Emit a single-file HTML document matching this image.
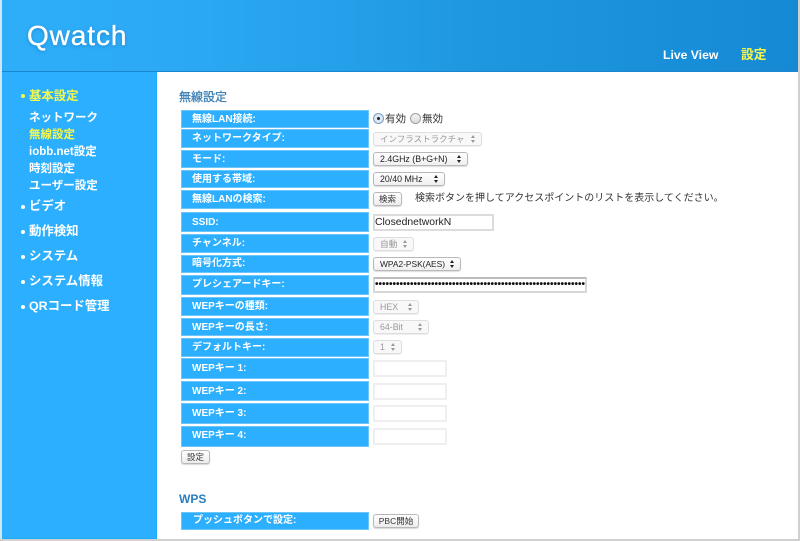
<!DOCTYPE html>
<html lang="ja"><head><meta charset="utf-8"><title>Qwatch</title>
<style>
html,body{margin:0;padding:0;background:#fff}
body{width:800px;height:541px;position:relative;overflow:hidden;font-family:"Liberation Sans","Noto Sans CJK JP",sans-serif;color:#333}
div,span{position:absolute;box-sizing:border-box;white-space:nowrap}
#hd{left:2px;top:0;width:796px;height:72px;background:linear-gradient(90deg,#2eaef9 0%,#2ba8f3 25%,#1e97e0 60%,#1689d4 100%);border-bottom:1px solid #1a86cf}
#sb{left:2px;top:72px;width:155px;height:467px;background:#2cafff;border-right:1px solid #1eaaff;border-bottom:1px solid #1eaaff}
.logo{left:27px;top:19px;font-size:28px;line-height:34px;color:#fff;letter-spacing:.9px;-webkit-text-stroke:.35px #fff;text-shadow:0 1px 3px rgba(0,60,120,.35)}
.nav{font-size:12.2px;font-weight:bold;line-height:16px;top:47px;color:#fff}
.m{font-size:12.4px;font-weight:bold;line-height:16px;color:#fff;left:29px}
.s{font-size:11.5px;line-height:16px;color:#fff;left:29px;font-weight:bold}
.d{left:21px;width:4px;height:4px;border-radius:50%;background:#fff}
.y{color:#f6f84a}
.l{left:181px;width:188px;background:#2cafff;border:1px solid #6cc6fb;color:#fff;font-size:10px;font-weight:bold;padding-left:10px}
.h{left:179px;font-size:12px;font-weight:bold;color:#2a7fc0;line-height:14px}
.sel{height:14px;background:linear-gradient(#fff,#efefef);border:1px solid #b8b8b8;border-radius:3px;font-size:8.8px;line-height:13px;padding-left:6px;color:#222;box-shadow:0 1px 1px rgba(0,0,0,.14)}
.sel.dis{color:#999;border-color:#dedede;background:#f8f8f8;box-shadow:0 1px 0 #eee}
.sel i{position:absolute;right:5px;top:2px;width:5px;height:8px}
.sel i:before,.sel i:after{content:"";position:absolute;left:0;border-left:2.5px solid transparent;border-right:2.5px solid transparent}
.sel i:before{top:0;border-bottom:3px solid #222}
.sel i:after{bottom:0;border-top:3px solid #222}
.sel.dis i:before{border-bottom-color:#999}
.sel.dis i:after{border-top-color:#999}
.in{left:373px;width:74px;height:17px;background:#fff;border:2px solid #efefef}
.btn{height:14px;background:linear-gradient(#fff,#ececec);border:1px solid #b8b8b8;border-radius:3px;font-size:8.5px;line-height:12px;text-align:center;color:#333;box-shadow:0 1px 1px rgba(0,0,0,.16)}
.t{font-size:10px;line-height:14px;color:#333}
.r{width:11px;height:11px;border-radius:50%;border:1px solid #a0a0a0;background:linear-gradient(#f4f4f4,#dcdcdc)}
.r.on{border-color:#7c9cc4;background:#dbe8f8}
.r.on:after{content:"";position:absolute;left:3px;top:3px;width:3px;height:3px;border-radius:50%;background:#222}
</style></head><body>
<div style="left:0;top:0;width:2px;height:541px;background:#cfe6f5"></div>
<div style="left:798px;top:0;width:2px;height:541px;background:#d0d0d0"></div>
<div style="left:0;top:539px;width:800px;height:2px;background:#d0d0d0"></div>
<div id="hd"></div>
<div id="sb"></div>
<div class="logo">Qwatch</div>
<div class="nav" style="left:663px">Live View</div>
<div class="nav y" style="left:741px;font-size:12.8px">設定</div>

<div class="d" style="top:94px;background:#f6f84a"></div><div class="m y" style="top:88px">基本設定</div>
<div class="s" style="top:110px">ネットワーク</div>
<div class="s y" style="top:127px">無線設定</div>
<div class="s" style="top:144px">iobb.net設定</div>
<div class="s" style="top:161px">時刻設定</div>
<div class="s" style="top:178px">ユーザー設定</div>
<div class="d" style="top:205px"></div><div class="m" style="top:198px">ビデオ</div>
<div class="d" style="top:230px"></div><div class="m" style="top:223px">動作検知</div>
<div class="d" style="top:255px"></div><div class="m" style="top:248px">システム</div>
<div class="d" style="top:280px"></div><div class="m" style="top:273px">システム情報</div>
<div class="d" style="top:305px"></div><div class="m" style="top:298px">QRコード管理</div>

<div class="h" style="top:90px;font-weight:normal;color:#3b7fb5;-webkit-text-stroke:.3px #3b7fb5">無線設定</div>
<div class="l" style="top:110px;height:18px;line-height:18px">無線LAN接続:</div>
<div class="l" style="top:129px;height:19px;line-height:18px">ネットワークタイプ:</div>
<div class="l" style="top:150px;height:18px;line-height:17px">モード:</div>
<div class="l" style="top:170px;height:18px;line-height:17px">使用する帯域:</div>
<div class="l" style="top:190px;height:19px;line-height:17px">無線LANの検索:</div>
<div class="l" style="top:212px;height:20px;line-height:20px">SSID:</div>
<div class="l" style="top:234px;height:19px;line-height:17px">チャンネル:</div>
<div class="l" style="top:255px;height:18px;line-height:16px">暗号化方式:</div>
<div class="l" style="top:275px;height:20px;line-height:17px">プレシェアードキー:</div>
<div class="l" style="top:297px;height:19px;line-height:17px">WEPキーの種類:</div>
<div class="l" style="top:318px;height:18px;line-height:17px">WEPキーの長さ:</div>
<div class="l" style="top:338px;height:19px;line-height:18px">デフォルトキー:</div>
<div class="l" style="top:358px;height:21px;line-height:19px">WEPキー 1:</div>
<div class="l" style="top:381px;height:20px;line-height:19px">WEPキー 2:</div>
<div class="l" style="top:403px;height:21px;line-height:19px">WEPキー 3:</div>
<div class="l" style="top:426px;height:21px;line-height:18px">WEPキー 4:</div>

<div class="r on" style="left:373px;top:113px"></div><div class="t" style="left:385px;top:112px;font-size:10.5px">有効</div>
<div class="r" style="left:410px;top:113px"></div><div class="t" style="left:422px;top:112px;font-size:10.5px">無効</div>

<div class="sel dis" style="left:373px;top:132px;width:109px;font-size:8.5px">インフラストラクチャ<i></i></div>
<div class="sel" style="left:373px;top:152px;width:95px">2.4GHz (B+G+N)<i></i></div>
<div class="sel" style="left:373px;top:172px;width:72px">20/40 MHz<i></i></div>
<div class="btn" style="left:373px;top:192px;width:29px">検索</div>
<div class="t" style="left:415px;top:192px">検索ボタンを押してアクセスポイントのリストを表示してください。</div>

<div style="left:373px;top:214px;width:121px;height:17px;background:#fff;border:2px solid #dcdcdc;font-size:10.4px;line-height:14px;padding-left:0;color:#222">ClosednetworkN</div>
<div class="sel dis" style="left:373px;top:237px;width:41px">自動<i></i></div>
<div class="sel" style="left:373px;top:257px;width:88px;font-size:8.4px">WPA2-PSK(AES)<i></i></div>
<div style="left:373px;top:277px;width:214px;height:16px;background:#fff;border:2px solid #d8d8d8;border-top-color:#bcbcbc;font-size:10px;font-weight:bold;line-height:11px;padding-left:0;overflow:hidden;color:#111">••••••••••••••••••••••••••••••••••••••••••••••••••••••••••••</div>
<div class="sel dis" style="left:373px;top:300px;width:46px">HEX<i></i></div>
<div class="sel dis" style="left:373px;top:320px;width:56px">64-Bit<i></i></div>
<div class="sel dis" style="left:373px;top:340px;width:29px">1<i></i></div>
<div class="in" style="top:360px"></div>
<div class="in" style="top:383px"></div>
<div class="in" style="top:405px"></div>
<div class="in" style="top:428px"></div>
<div class="btn" style="left:181px;top:450px;width:29px">設定</div>

<div class="h" style="top:492px">WPS</div>
<div class="l" style="top:512px;height:18px;line-height:16px;padding-left:11px">プッシュボタンで設定:</div>
<div class="btn" style="left:373px;top:514px;width:46px">PBC開始</div>
</body></html>
